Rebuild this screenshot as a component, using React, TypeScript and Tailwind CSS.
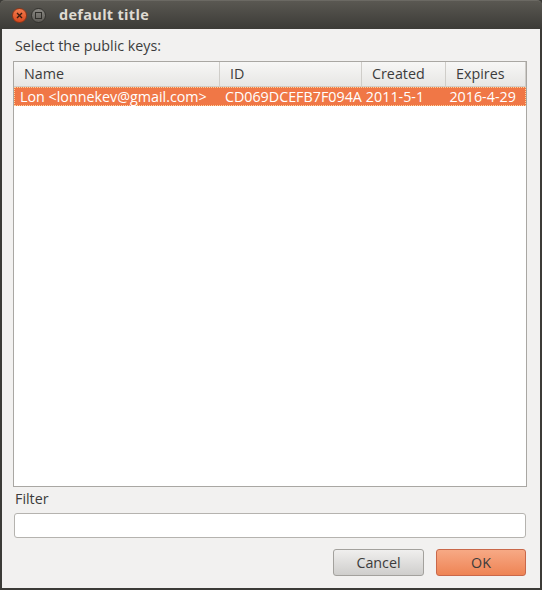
const font = { fontFamily: '"Open Sans", "DejaVu Sans", sans-serif' };

const columns = [
  { label: 'Name', width: 'w-[206px]' },
  { label: 'ID', width: 'w-[142px]' },
  { label: 'Created', width: 'w-[84px]' },
  { label: 'Expires', width: 'w-[80px]' },
];

const rows = [
  ['Lon <lonnekev@gmail.com>', 'CD069DCEFB7F094A', '2011-5-1', '2016-4-29'],
];

export default function App() {
  return (
    <div className="w-[542px] h-[590px] bg-[#3c3b37] flex flex-col text-[14.3px]" style={font}>
      {/* title bar */}
      <div className="h-[29px] shrink-0 flex items-center bg-gradient-to-b from-[#5a5852] to-[#3c3b37] border-t border-[#6b6963] rounded-t-[5px]">
        <div className="ml-[12px] w-[15px] h-[15px] rounded-full bg-gradient-to-b from-[#f37b4c] to-[#d8481d] border border-[#8f3416] flex items-center justify-center">
          <svg width="7" height="7" viewBox="0 0 7 7">
            <path d="M1 1L6 6M6 1L1 6" stroke="#3a1c10" strokeWidth="1.4" />
          </svg>
        </div>
        <div className="ml-[4px] w-[15px] h-[15px] rounded-full bg-gradient-to-b from-[#8a8883] to-[#5e5c57] border border-[#33322e] flex items-center justify-center">
          <div className="w-[7px] h-[7px] border border-[#2f2e2a]" />
        </div>
        <span className="ml-[13px] text-[14.5px] font-bold text-[#dfdbd2] tracking-[0.3px]">default title</span>
      </div>

      {/* body */}
      <div className="flex-1 mx-[2px] mb-[2px] bg-[#f2f1f0] flex flex-col pl-[11px] pr-[13px] text-[#3c3c3c]">
        <div className="h-[32px] flex items-center pt-[1px] pl-[2px]">Select the public keys:</div>

        <div className="h-[426px] bg-white border border-[#a9a7a3] flex flex-col">
          <div className="flex h-[25px] shrink-0">
            {columns.map((c) => (
              <div
                key={c.label}
                className={`${c.width} h-full bg-gradient-to-b from-[#f7f7f6] to-[#e7e6e4] border-r border-b border-[#cfcdc9] flex items-center pl-[10px]`}
              >
                {c.label}
              </div>
            ))}
          </div>
          {rows.map((r, i) => (
            <div key={i} className="flex h-[19px] bg-[#f07746] text-white border border-dotted border-[#ffd39b]">
              <div className="w-[206px] pl-[5px] flex items-center whitespace-nowrap">{r[0]}</div>
              <div className="w-[142px] pl-[5px] flex items-center whitespace-nowrap">{r[1]}</div>
              <div className="w-[84px] pl-[4px] flex items-center whitespace-nowrap">{r[2]}</div>
              <div className="w-[80px] pl-[4px] flex items-center whitespace-nowrap">{r[3]}</div>
            </div>
          ))}
        </div>

        <div className="h-[24px] flex items-center pl-[2px]">Filter</div>
        <input
          className="mt-[2px] ml-[1px] h-[25px] w-[512px] bg-white border border-[#b5b3af] rounded-[3px] outline-none"
          style={font}
        />

        <div className="mt-[11px] flex justify-end gap-[12px] pr-[1px]">
          <button className="w-[91px] h-[27px] rounded-[3px] border border-[#a3a19d] bg-gradient-to-b from-[#f0efee] to-[#cfcecc] text-[#3c3c3c]" style={font}>
            Cancel
          </button>
          <button className="w-[90px] h-[27px] rounded-[3px] border border-[#c9684a] bg-gradient-to-b from-[#f7a985] to-[#ee8454] text-[#3c3c3c]" style={font}>
            OK
          </button>
        </div>
      </div>
    </div>
  );
}
